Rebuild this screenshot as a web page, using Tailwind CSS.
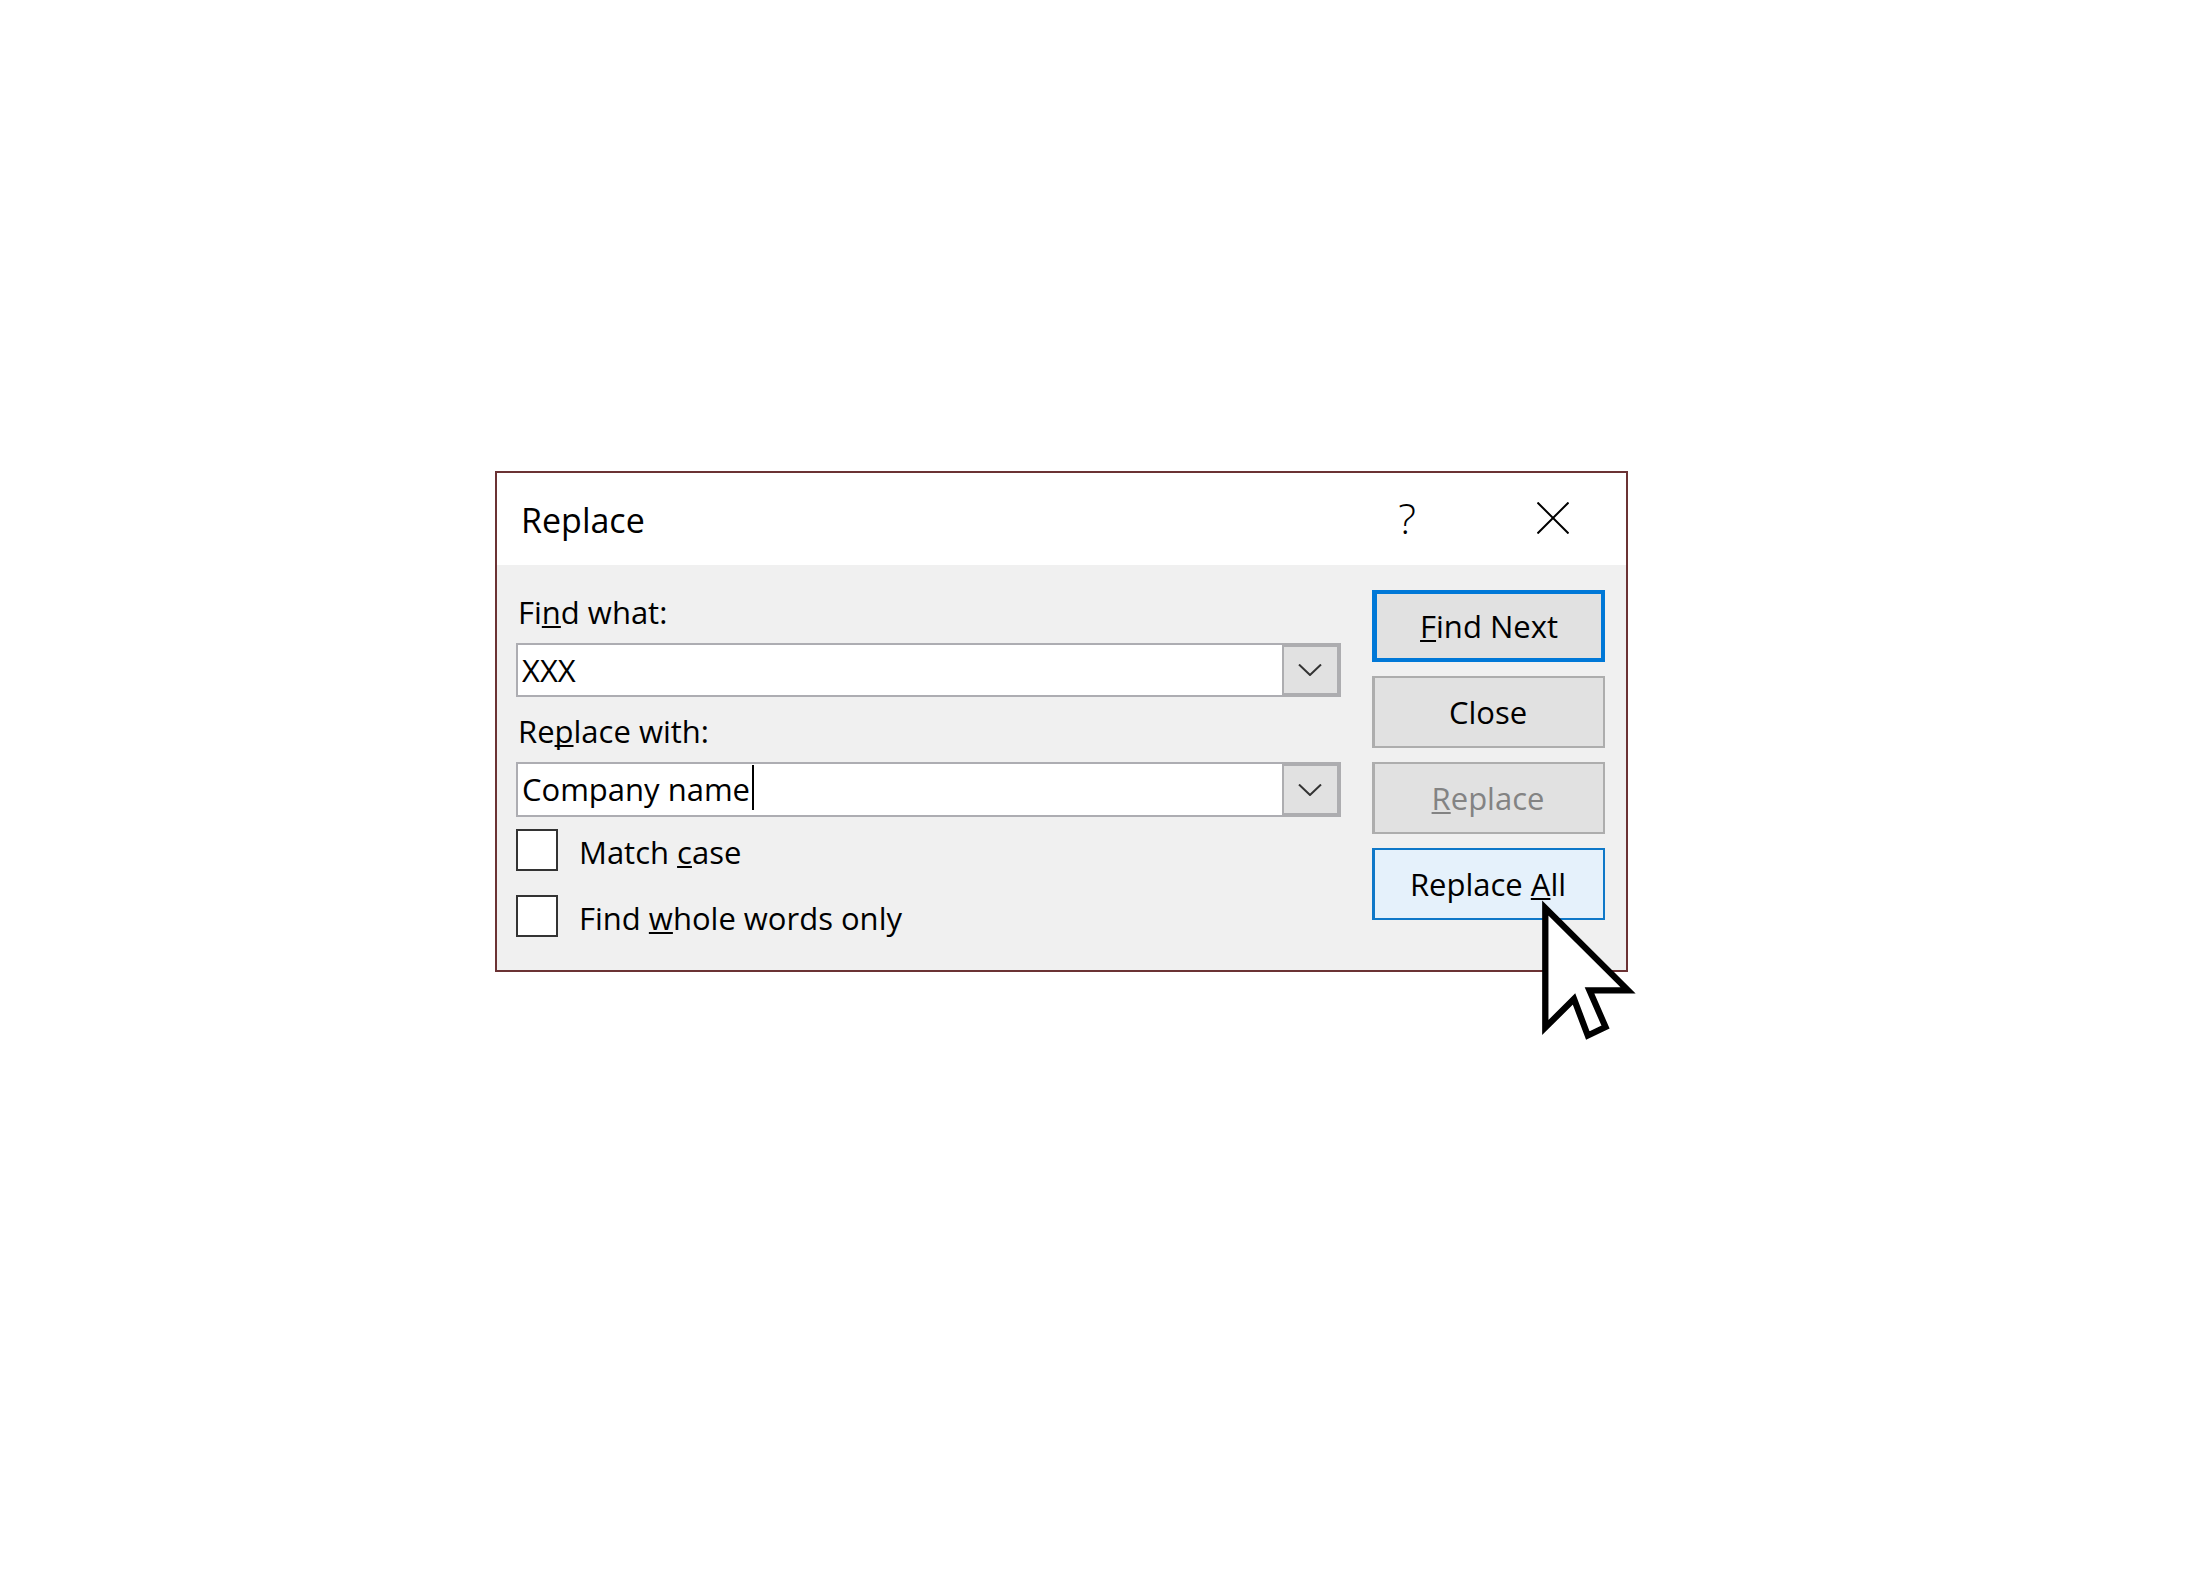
<!DOCTYPE html>
<html lang="en">
<head>
<meta charset="utf-8">
<title>Replace</title>
<script src="https://cdn.jsdelivr.net/npm/@tailwindcss/browser@4"></script>
</head>
<body class="bg-white font-['Open_Sans','Noto_Sans',sans-serif] text-[31px] text-black">
<main class="flex min-h-screen items-center justify-center pr-[72px] pb-[135px]">
  <section role="dialog" aria-labelledby="title" class="relative w-full max-w-[1133px] border-2 border-[#6b3234] bg-[#f0f0f0]">
    <header class="flex h-[92px] items-center bg-white pl-6">
      <h1 id="title" class="flex-1 pt-0.5 text-[34px]">Replace</h1>
      <button type="button" aria-label="Help" class="flex h-full w-[146px] items-center justify-center pb-1 text-[42px]"><span class="font-light">?</span></button>
      <button type="button" aria-label="Close window" class="flex h-full w-[146px] items-center justify-center pb-0.5">
        <svg class="size-8" viewBox="0 0 32 32" fill="none" stroke="#000" stroke-width="2"><path d="M0.5 0.5L31.5 31.5M31.5 0.5L0.5 31.5"/></svg>
      </button>
    </header>
    <form class="flex gap-[31px] pr-[21px] pl-[19px]">
      <div class="min-w-0 flex-1 pt-[13px] pb-[33px]">
        <label for="find" class="block pt-1 pl-0.5 leading-[61px]">Fi<span class="underline decoration-2 underline-offset-2 [text-decoration-skip-ink:none]">n</span>d what:</label>
        <div class="flex h-[54px] border-2 border-[#adadb2] bg-white">
          <div class="flex min-w-0 flex-1 items-center pl-1">
            <input id="find" type="text" value="XXX" class="w-full outline-none">
          </div>
          <button type="button" aria-label="Show recent searches" class="-my-0.5 -mr-0.5 flex w-[59px] items-center justify-center border-4 border-l-2 border-[#adadb0] bg-[#e1e1e1] pr-0.5">
            <svg class="h-3 w-6" viewBox="0 0 24 12" fill="none" stroke="#333" stroke-width="2"><path d="M1 0.5L12 11L23 0.5"/></svg>
          </button>
        </div>
        <label for="replace" class="block pt-1 pl-0.5 leading-[61px]">Re<span class="underline decoration-2 underline-offset-2 [text-decoration-skip-ink:none]">p</span>lace with:</label>
        <div class="flex h-[55px] border-2 border-[#adadb2] bg-white">
          <div class="flex min-w-0 flex-1 items-center pl-1">
            <input id="replace" type="text" value="Company name" class="field-sizing-content pr-0.5 outline-none">
            <span class="mb-1 h-[45px] w-0.5 bg-black"></span>
          </div>
          <button type="button" aria-label="Show recent replacements" class="-my-0.5 -mr-0.5 flex w-[59px] items-center justify-center border-4 border-l-2 border-[#adadb0] bg-[#e1e1e1] pr-0.5">
            <svg class="h-3 w-6" viewBox="0 0 24 12" fill="none" stroke="#333" stroke-width="2"><path d="M1 0.5L12 11L23 0.5"/></svg>
          </button>
        </div>
        <div class="mt-3 flex flex-col gap-6">
          <label class="flex h-[42px] items-center gap-[21px]">
            <input type="checkbox" class="size-[42px] appearance-none border-2 border-[#333] bg-white">
            <span class="pt-1">Match <span class="underline decoration-2 underline-offset-2 [text-decoration-skip-ink:none]">c</span>ase</span>
          </label>
          <label class="flex h-[42px] items-center gap-[21px]">
            <input type="checkbox" class="size-[42px] appearance-none border-2 border-[#333] bg-white">
            <span class="pt-1">Find <span class="underline decoration-2 underline-offset-2 [text-decoration-skip-ink:none]">w</span>hole words only</span>
          </label>
        </div>
      </div>
      <div class="flex w-[233px] flex-col gap-3.5 pt-[25px]">
        <button type="button" class="h-[72px] border-4 border-l-5 border-[#0078d7] bg-[#e1e1e1]"><span class="underline decoration-2 underline-offset-2 [text-decoration-skip-ink:none]">F</span>ind Next</button>
        <button type="button" class="h-[72px] border-2 border-l-3 border-[#adadad] bg-[#e1e1e1] pr-0.5">Close</button>
        <button type="button" disabled class="h-[72px] border-2 border-l-3 border-[#adadad] bg-[#e1e1e1] pr-0.5 text-[#838383]"><span class="underline decoration-2 underline-offset-2 [text-decoration-skip-ink:none]">R</span>eplace</button>
        <button type="button" class="h-[72px] border-2 border-l-3 border-[#0f78c8] bg-[#e5f1fb] pr-0.5">Replace <span class="underline decoration-2 underline-offset-2 [text-decoration-skip-ink:none]">A</span>ll</button>
      </div>
    </form>
    <!-- Mouse pointer -->
    <svg class="pointer-events-none absolute -right-3.5 -bottom-[77px] h-[150px] w-[100px]" viewBox="0 0 100 150" fill="#fff" stroke="#000" stroke-width="6.3" stroke-miterlimit="10"><path d="M5.3 11V130.5L34 102L47.8 138.5L65.5 130L49.5 93.3H88Z"/></svg>
  </section>
</main>
</body>
</html>
